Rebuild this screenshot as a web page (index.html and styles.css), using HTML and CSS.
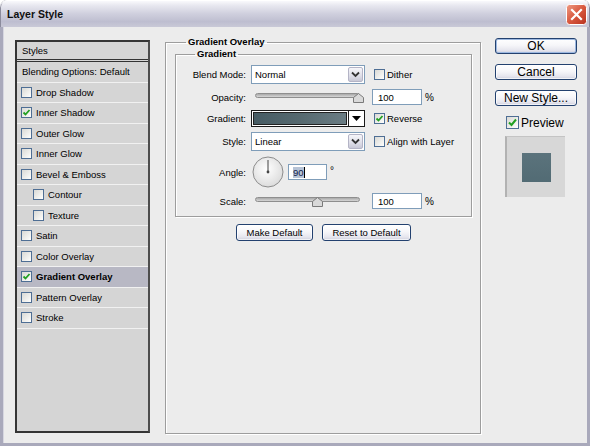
FILE: index.html
```html
<!DOCTYPE html>
<html>
<head>
<meta charset="utf-8">
<link rel="stylesheet" href="styles.css">
</head>
<body>
<div class="window">
  <div class="titlebar">
    <span class="title">Layer Style</span>
    <span class="close">
      <svg width="21" height="21" viewBox="0 0 21 21">
        <defs>
          <linearGradient id="cg" x1="0" y1="0" x2="1" y2="1">
            <stop offset="0" stop-color="#ef9c84"/>
            <stop offset="0.5" stop-color="#d8583e"/>
            <stop offset="1" stop-color="#b8321f"/>
          </linearGradient>
        </defs>
        <rect x="0.5" y="0.5" width="20" height="20" rx="3" fill="url(#cg)" stroke="#fff"/>
        <path d="M6 6 L15 15 M15 6 L6 15" stroke="#fff" stroke-width="2.2" stroke-linecap="square"/>
      </svg>
    </span>
  </div>
  <div class="body">
    <div class="styles-panel">
      <div class="row header">Styles</div>
      <div class="row plain">Blending Options: Default</div>
      <div class="row"><span class="cb"></span>Drop Shadow</div>
      <div class="row"><span class="cb"><svg width="9" height="9" viewBox="0 0 9 9"><path d="M1.5 4.5 L3.5 6.5 L7.5 2" fill="none" stroke="#22a022" stroke-width="1.8"/></svg></span>Inner Shadow</div>
      <div class="row"><span class="cb"></span>Outer Glow</div>
      <div class="row"><span class="cb"></span>Inner Glow</div>
      <div class="row"><span class="cb"></span>Bevel &amp; Emboss</div>
      <div class="row sub"><span class="cb"></span>Contour</div>
      <div class="row sub"><span class="cb"></span>Texture</div>
      <div class="row"><span class="cb"></span>Satin</div>
      <div class="row"><span class="cb"></span>Color Overlay</div>
      <div class="row selected"><span class="cb"><svg width="9" height="9" viewBox="0 0 9 9"><path d="M1.5 4.5 L3.5 6.5 L7.5 2" fill="none" stroke="#22a022" stroke-width="1.8"/></svg></span>Gradient Overlay</div>
      <div class="row"><span class="cb"></span>Pattern Overlay</div>
      <div class="row"><span class="cb"></span>Stroke</div>
    </div>

    <fieldset class="group outer">
      <legend>Gradient Overlay</legend>
      <fieldset class="group inner">
        <legend>Gradient</legend>
        <div class="form">
          <span class="lbl">Blend Mode:</span>
          <div class="select"><span class="val">Normal</span><span class="drop"><svg width="9" height="7" viewBox="0 0 9 7"><path d="M1 1.5 L4.5 5 L8 1.5" fill="none" stroke="#333" stroke-width="1.8"/></svg></span></div>
          <span class="opt"><span class="cb"></span>Dither</span>

          <span class="lbl">Opacity:</span>
          <div class="slider"><div class="track"><span class="thumb" style="left: 100%"><svg width="11" height="10" viewBox="0 0 11 10"><path d="M0.5 4.5 L5.5 0.5 L10.5 4.5 L10.5 9.5 L0.5 9.5 Z" fill="#d9d9d9" stroke="#7a7a7a"/></svg></span></div></div>
          <span class="numwrap"><span class="num">100</span><span class="unit">%</span></span>

          <span class="lbl">Gradient:</span>
          <div class="gradient"><span class="ramp"></span><span class="gdrop"><svg width="9" height="5" viewBox="0 0 9 5"><path d="M0 0 L9 0 L4.5 5 Z" fill="#000"/></svg></span></div>
          <span class="opt"><span class="cb"><svg width="9" height="9" viewBox="0 0 9 9"><path d="M1.5 4.5 L3.5 6.5 L7.5 2" fill="none" stroke="#22a022" stroke-width="1.8"/></svg></span>Reverse</span>

          <span class="lbl">Style:</span>
          <div class="select"><span class="val">Linear</span><span class="drop"><svg width="9" height="7" viewBox="0 0 9 7"><path d="M1 1.5 L4.5 5 L8 1.5" fill="none" stroke="#333" stroke-width="1.8"/></svg></span></div>
          <span class="opt"><span class="cb"></span>Align with Layer</span>

          <span class="lbl">Angle:</span>
          <div class="angle">
            <svg class="dial" width="32" height="32" viewBox="0 0 32 32">
              <defs>
                <radialGradient id="dg" cx="0.45" cy="0.4" r="0.6">
                  <stop offset="0" stop-color="#ffffff"/>
                  <stop offset="1" stop-color="#dcdcdc"/>
                </radialGradient>
              </defs>
              <circle cx="16" cy="16" r="15" fill="url(#dg)" stroke="#8c8c8c"/>
              <line x1="16" y1="16" x2="16" y2="4" stroke="#444" stroke-width="1"/>
              <circle cx="16" cy="16" r="1.4" fill="#444"/>
            </svg>
            <span class="num angle-num"><span class="sel">90</span><span class="caret"></span></span>
            <span class="deg">°</span>
          </div>

          <span class="lbl">Scale:</span>
          <div class="slider"><div class="track"><span class="thumb" style="left: 60%"><svg width="11" height="10" viewBox="0 0 11 10"><path d="M0.5 4.5 L5.5 0.5 L10.5 4.5 L10.5 9.5 L0.5 9.5 Z" fill="#d9d9d9" stroke="#7a7a7a"/></svg></span></div></div>
          <span class="numwrap"><span class="num">100</span><span class="unit">%</span></span>
        </div>
      </fieldset>
      <div class="actions">
        <span class="btn small make">Make Default</span>
        <span class="btn small reset">Reset to Default</span>
      </div>
    </fieldset>

    <div class="side">
      <span class="btn big default">OK</span>
      <span class="btn big">Cancel</span>
      <span class="btn big">New Style...</span>
      <span class="preview-opt"><span class="cb large"><svg width="11" height="11" viewBox="0 0 11 11"><path d="M2 5.5 L4.5 8 L9 2.5" fill="none" stroke="#22a022" stroke-width="2"/></svg></span>Preview</span>
      <div class="preview"><span class="swatch"></span></div>
    </div>
  </div>
</div>
</body>
</html>
```

FILE: styles.css
```css
html, body {
  margin: 0;
  padding: 0;
  background: #ffffff;
}

body {
  font-family: "Liberation Sans", Arial, sans-serif;
  font-size: 9.5px;
  color: #000;
}

.window {
  width: 590px;
  height: 446px;
  display: flex;
  flex-direction: column;
  overflow: hidden;
}

.titlebar {
  height: 27px;
  flex: none;
  display: flex;
  align-items: center;
  justify-content: space-between;
  padding: 0 3px 0 7px;
  border-radius: 7px 7px 0 0;
  background: linear-gradient(to bottom, #fdfdff 0%, #e8e8f0 20%, #d0d0de 50%, #bebed0 80%, #c9c9d7 100%);
  box-shadow: inset 0 1px 0 #ffffff, inset 1px 0 0 #8b8b9c, inset -1px 0 0 #8b8b9c;
}

.title {
  font-weight: bold;
  font-size: 10.5px;
  color: #101010;
  padding-top: 1px;
}

.close {
  display: flex;
  margin-top: 1px;
}

.body {
  flex: 1;
  display: flex;
  align-items: flex-start;
  background: #ececec;
  border: solid #a9a9bb;
  border-width: 0 3px 3px 3px;
  padding-left: 12px;
  box-shadow: inset 1px 0 0 #d6d6e0;
}

/* ---------- left styles list ---------- */
.styles-panel {
  width: 135px;
  height: 393px;
  margin-top: 13px;
  flex: none;
  box-sizing: border-box;
  border: 2px solid #353535;
  border-right-color: #4d4d4d;
  background: #d5d5d5;
  display: flex;
  flex-direction: column;
}

.row {
  height: 20.5px;
  flex: none;
  box-sizing: border-box;
  border-bottom: 1px solid #f1f1f1;
  display: flex;
  align-items: center;
  padding-left: 4px;
  gap: 4px;
  white-space: nowrap;
}

.row.header {
  height: 20px;
  padding-left: 5px;
  border-bottom: 3px double #333333;
}

.row.plain {
  padding-left: 5px;
}

.row.sub {
  padding-left: 16px;
}

.row.selected {
  background: #b8b8c4;
  font-weight: bold;
}

.cb {
  width: 11px;
  height: 11px;
  flex: none;
  box-sizing: border-box;
  border: 1px solid #4e6e94;
  background: linear-gradient(135deg, #d9d9d5 0%, #f7f7f5 80%, #ffffff 100%);
  display: inline-flex;
  align-items: center;
  justify-content: center;
}

.cb.large {
  width: 13px;
  height: 13px;
}

/* ---------- group boxes ---------- */
.group {
  margin: 0;
  box-sizing: border-box;
  border: 1px solid #9d9d9d;
  box-shadow: 1px 1px 0 #ffffff, inset 1px 1px 0 #ffffff;
  min-width: 0;
}

.group legend {
  font-weight: bold;
  line-height: 12px;
  padding: 0 2px;
  white-space: nowrap;
}

.outer {
  width: 316px;
  height: 398px;
  margin: 9px 0 0 15px;
  flex: none;
  padding: 0 8px 0 9px;
}

.outer > legend {
  margin-left: 11px;
}

.inner {
  width: 297px;
  padding: 0 0 7px 0;
}

.inner > legend {
  margin-left: 19px;
}

.form {
  margin-top: 5px;
  display: grid;
  grid-template-columns: 75px 121px 1fr;
  row-gap: 5px;
  align-items: center;
}

.lbl {
  text-align: right;
  padding-right: 5px;
  white-space: nowrap;
}

.select {
  width: 114px;
  height: 19px;
  box-sizing: border-box;
  border: 1px solid #7f9db9;
  background: #ffffff;
  display: flex;
  align-items: center;
  justify-content: space-between;
  padding: 1px;
}

.select .val {
  padding-left: 2px;
}

.drop {
  width: 15px;
  height: 15px;
  box-sizing: border-box;
  border: 1px solid #b4b4c6;
  border-radius: 2px;
  background: linear-gradient(to bottom, #f6f6fa 0%, #dedee8 60%, #c8c8d6 100%);
  display: flex;
  align-items: center;
  justify-content: center;
}

.opt {
  display: flex;
  align-items: center;
  gap: 2px;
  padding-left: 2px;
  white-space: nowrap;
}

.slider {
  width: 114px;
  height: 16px;
  box-sizing: border-box;
  padding: 4px 5px 0 4px;
}

.track {
  position: relative;
  height: 5px;
  box-sizing: border-box;
  border: 1px solid #8e8e8e;
  border-radius: 3px;
  background: linear-gradient(to bottom, #a9a9a9, #d6d6d6);
}

.thumb {
  position: absolute;
  top: -1px;
  margin-left: -6px;
  display: flex;
}

.numwrap {
  display: flex;
  align-items: center;
  gap: 3px;
}

.num {
  width: 50px;
  height: 16px;
  box-sizing: border-box;
  border: 1px solid #7f9db9;
  background: #ffffff;
  padding-left: 5px;
  display: flex;
  align-items: center;
}

.unit {
  font-size: 10px;
}

.gradient {
  width: 114px;
  height: 17px;
  box-sizing: border-box;
  border: 1px solid #1a1a1a;
  background: #ffffff;
  display: flex;
}

.ramp {
  flex: 1;
  border: 1px solid #ffffff;
  outline: 1px solid #222;
  outline-offset: -2px;
  background: linear-gradient(to right, #465b63 0%, #56696f 50%, #6b7d84 100%);
}

.gdrop {
  width: 15px;
  flex: none;
  border-left: 1px solid #1a1a1a;
  display: flex;
  align-items: center;
  justify-content: center;
  background: #ffffff;
}

.angle {
  grid-column: 2 / 4;
  display: flex;
  align-items: center;
  padding-left: 1px;
}

.dial {
  display: block;
  flex: none;
}

.angle-num {
  width: 39px;
  margin-left: 4px;
  padding-left: 4px;
}

.sel {
  background: #b6c3d6;
  color: #10204a;
  line-height: 11px;
}

.caret {
  width: 1px;
  height: 11px;
  background: #000;
}

.deg {
  margin-left: 3px;
  align-self: flex-start;
  margin-top: 9px;
  font-size: 10px;
}

/* ---------- buttons ---------- */
.btn {
  box-sizing: border-box;
  display: flex;
  align-items: center;
  justify-content: center;
  border: 1px solid #23416f;
  border-radius: 3px;
  background: linear-gradient(to bottom, #ffffff 0%, #f6f6f9 45%, #e6e6ee 80%, #cdcfdd 100%);
  box-shadow: inset 0 0 0 1px rgba(255, 255, 255, 0.7);
  white-space: nowrap;
}

.actions {
  margin-top: 7px;
  display: flex;
  justify-content: center;
  gap: 9px;
}

.btn.small {
  height: 17px;
}

.btn.make {
  width: 77px;
}

.btn.reset {
  width: 89px;
}

.side {
  width: 82px;
  margin: 11px 0 0 14px;
  flex: none;
  display: flex;
  flex-direction: column;
}

.btn.big {
  height: 16px;
  font-size: 12px;
  margin-bottom: 10px;
}

.btn.default {
  box-shadow: inset 0 0 0 1px #9cb8e0;
}

.preview-opt {
  display: flex;
  align-items: center;
  gap: 2px;
  margin-left: 11px;
  height: 13px;
  font-size: 12px;
}

.preview {
  width: 60px;
  height: 61px;
  margin: 7px 0 0 10px;
  box-sizing: border-box;
  border-left: 2px solid #b2b2b2;
  border-top: 1px solid #c4c4c4;
  background: #d7d7d7;
  display: flex;
  align-items: center;
  justify-content: center;
}

.swatch {
  width: 29px;
  height: 29px;
  background: linear-gradient(to bottom, #5b737c, #526b74);
}
```
